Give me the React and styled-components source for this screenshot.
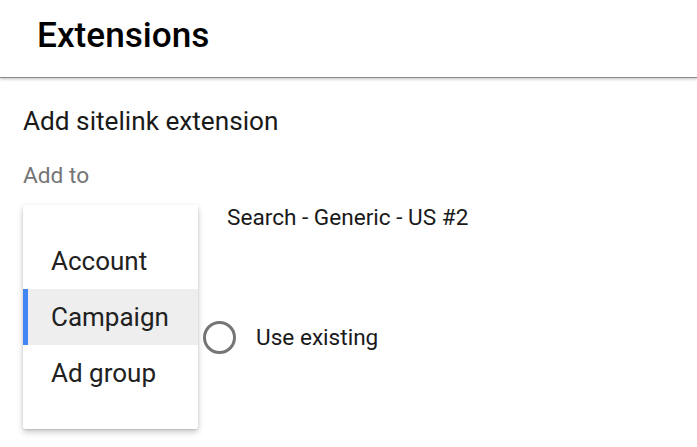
import styled, { createGlobalStyle } from "styled-components";

const Global = createGlobalStyle`
    body {
        margin: 0;
        background: #ffffff;
        font-family: Roboto, "Liberation Sans", Arial, sans-serif;
        color: #212121;
    }
`;

const Page = styled.div`
    width: 697px;
    height: 447px;
    overflow: hidden;
    background: #fff;
`;

const Header = styled.div`
    height: 62px;
    padding: 15px 0 0 37px;
    border-bottom: 1px solid #8a8a8a;
    box-shadow: 0 1px 3px rgba(0, 0, 0, 0.25);
`;

const Title = styled.h1`
    margin: 0;
    font-size: 35.2px;
    line-height: 40px;
    font-weight: 500;
    color: #000;
`;

const Body = styled.div`
    padding: 0 23px;
`;

const Heading = styled.div`
    margin-top: 28px;
    font-size: 26.2px;
    line-height: 30px;
    color: #1a1a1a;
`;

const Label = styled.div`
    margin-top: 27px;
    font-size: 22.7px;
    line-height: 26px;
    color: #757575;
`;

const Field = styled.div`
    position: relative;
    margin-top: 16px;
    height: 230px;
`;

const CampaignRow = styled.div`
    padding-left: 204px;
    font-size: 22.6px;
    line-height: 26px;
    color: #1a1a1a;
`;

const RadioRow = styled.div`
    display: flex;
    align-items: center;
    gap: 20px;
    margin-top: 90px;
    padding-left: 180px;
    font-size: 22.6px;
    line-height: 26px;
    color: #1a1a1a;
`;

const Radio = styled.span`
    width: 27px;
    height: 27px;
    border: 3px solid #757575;
    border-radius: 50%;
    box-sizing: content-box;
    flex: none;
`;

const Menu = styled.div`
    position: absolute;
    left: 0;
    top: 0;
    width: 175px;
    padding: 28px 0;
    background: #fff;
    border-radius: 2px;
    box-shadow: 0 3px 6px rgba(0, 0, 0, 0.22), 0 1px 2px rgba(0, 0, 0, 0.12);
`;

const Item = styled.div`
    height: 56px;
    display: flex;
    align-items: center;
    padding-left: 28px;
    font-size: 26px;
    color: #212121;
    background: ${(p) => (p.$active ? "#eeeeee" : "transparent")};
    box-shadow: ${(p) => (p.$active ? "inset 5px 0 0 #4285f4" : "none")};
`;

export default function App() {
    return (
        <Page>
            <Global />
            <Header>
                <Title>Extensions</Title>
            </Header>
            <Body>
                <Heading>Add sitelink extension</Heading>
                <Label>Add to</Label>
                <Field>
                    <CampaignRow>Search - Generic - US #2</CampaignRow>
                    <RadioRow>
                        <Radio />
                        <span>Use existing</span>
                    </RadioRow>
                    <Menu>
                        <Item>Account</Item>
                        <Item $active>Campaign</Item>
                        <Item>Ad group</Item>
                    </Menu>
                </Field>
            </Body>
        </Page>
    );
}
